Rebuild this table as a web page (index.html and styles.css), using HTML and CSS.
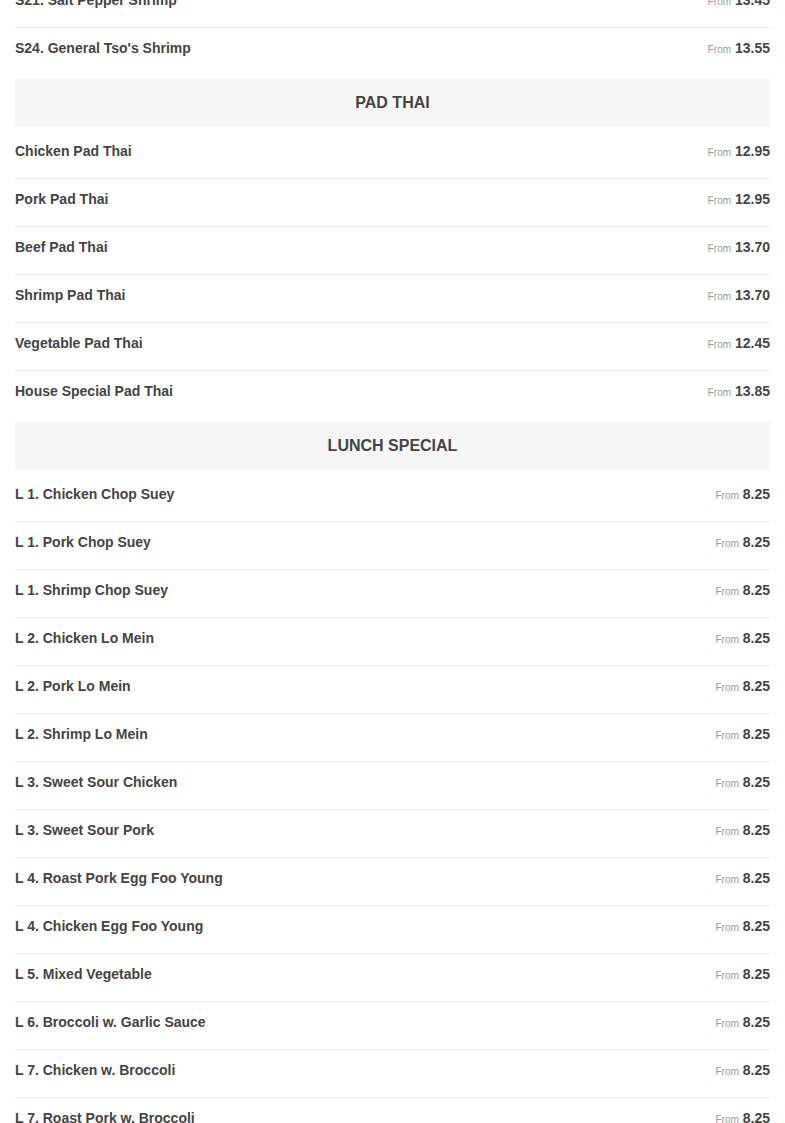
FILE: index.html
```html
<!DOCTYPE html>
<html>
<head>
<meta charset="utf-8">
<link rel="stylesheet" href="styles.css">
</head>
<body>
<div class="menu">
  <div class="row first"><span class="name">S21. Salt Pepper Shrimp</span><span class="price"><small>From</small> 13.45</span></div>
  <div class="row"><span class="name">S24. General Tso's Shrimp</span><span class="price"><small>From</small> 13.55</span></div>

  <div class="cat">PAD THAI</div>
  <div class="row first"><span class="name">Chicken Pad Thai</span><span class="price"><small>From</small> 12.95</span></div>
  <div class="row"><span class="name">Pork Pad Thai</span><span class="price"><small>From</small> 12.95</span></div>
  <div class="row"><span class="name">Beef Pad Thai</span><span class="price"><small>From</small> 13.70</span></div>
  <div class="row"><span class="name">Shrimp Pad Thai</span><span class="price"><small>From</small> 13.70</span></div>
  <div class="row"><span class="name">Vegetable Pad Thai</span><span class="price"><small>From</small> 12.45</span></div>
  <div class="row"><span class="name">House Special Pad Thai</span><span class="price"><small>From</small> 13.85</span></div>

  <div class="cat">LUNCH SPECIAL</div>
  <div class="row first"><span class="name">L 1. Chicken Chop Suey</span><span class="price"><small>From</small> 8.25</span></div>
  <div class="row"><span class="name">L 1. Pork Chop Suey</span><span class="price"><small>From</small> 8.25</span></div>
  <div class="row"><span class="name">L 1. Shrimp Chop Suey</span><span class="price"><small>From</small> 8.25</span></div>
  <div class="row"><span class="name">L 2. Chicken Lo Mein</span><span class="price"><small>From</small> 8.25</span></div>
  <div class="row"><span class="name">L 2. Pork Lo Mein</span><span class="price"><small>From</small> 8.25</span></div>
  <div class="row"><span class="name">L 2. Shrimp Lo Mein</span><span class="price"><small>From</small> 8.25</span></div>
  <div class="row"><span class="name">L 3. Sweet Sour Chicken</span><span class="price"><small>From</small> 8.25</span></div>
  <div class="row"><span class="name">L 3. Sweet Sour Pork</span><span class="price"><small>From</small> 8.25</span></div>
  <div class="row"><span class="name">L 4. Roast Pork Egg Foo Young</span><span class="price"><small>From</small> 8.25</span></div>
  <div class="row"><span class="name">L 4. Chicken Egg Foo Young</span><span class="price"><small>From</small> 8.25</span></div>
  <div class="row"><span class="name">L 5. Mixed Vegetable</span><span class="price"><small>From</small> 8.25</span></div>
  <div class="row"><span class="name">L 6. Broccoli w. Garlic Sauce</span><span class="price"><small>From</small> 8.25</span></div>
  <div class="row"><span class="name">L 7. Chicken w. Broccoli</span><span class="price"><small>From</small> 8.25</span></div>
  <div class="row"><span class="name">L 7. Roast Pork w. Broccoli</span><span class="price"><small>From</small> 8.25</span></div>
</div>
</body>
</html>
```
FILE: styles.css
```css
html, body {
  margin: 0;
  padding: 0;
  background: #fff;
  overflow: hidden;
}
body {
  font-family: "Liberation Sans", Arial, sans-serif;
  color: #444;
}
.menu {
  margin: -21px 15px 0;
}
.row {
  display: flex;
  justify-content: space-between;
  align-items: center;
  border-top: 1px solid #e9e9e9;
  padding: 10px 0 17px;
  height: 20px;
  line-height: 20px;
  font-size: 14px;
  font-weight: bold;
}
.row.first {
  border-top-color: transparent;
}
.price small {
  font-size: 10px;
  line-height: 10px;
  font-weight: normal;
  color: #999;
}
.cat {
  margin: 4px 0 3px;
  height: 48px;
  line-height: 48px;
  background: #f6f6f6;
  text-align: center;
  font-size: 16px;
  font-weight: bold;
  color: #444;
}
```
